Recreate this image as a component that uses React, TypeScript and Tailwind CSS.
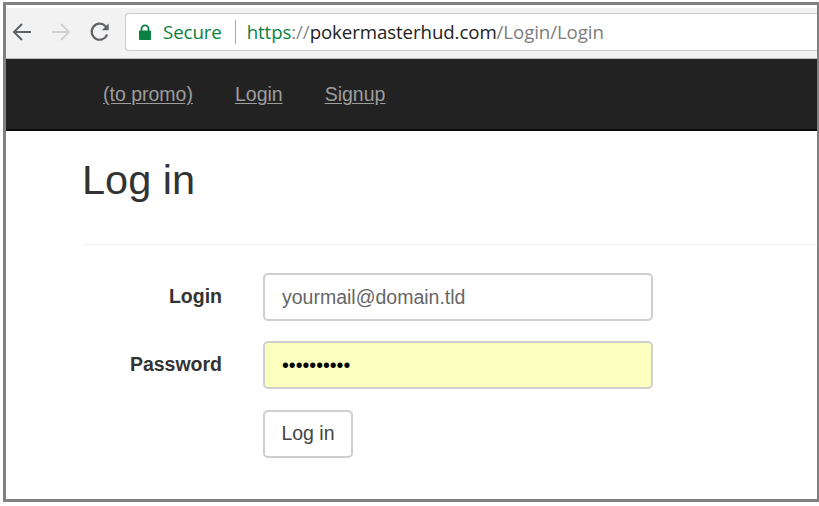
const links = ['(to promo)', 'Login', 'Signup']

const inputBase =
  'h-12 w-[390px] rounded-[5px] border-2 border-[#cfcfcf] px-[17px] text-[19.5px] outline-none font-["Liberation_Sans",Arial,sans-serif]'

function Toolbar() {
  return (
    <div className="flex h-[54px] items-center border-b border-[#bdbdbd] border-t-[3px] border-t-white bg-[#f2f2f2] pb-[2px] font-['Open_Sans','Noto_Sans',sans-serif]">
      <div className="ml-[4px] flex w-[115px] items-center">
        <svg width="24" height="24" viewBox="0 0 24 24" fill="none" stroke="#5f6368" strokeWidth="2" className="ml-0">
          <path d="M21 12H4M12 4l-8 8 8 8" />
        </svg>
        <svg width="24" height="24" viewBox="0 0 24 24" fill="none" stroke="#cfd1d3" strokeWidth="2" className="ml-[15px]">
          <path d="M3 12h17M12 4l8 8-8 8" />
        </svg>
        <svg width="24" height="24" viewBox="0 0 24 24" fill="none" stroke="#5f6368" strokeWidth="2.2" className="ml-[15px]">
          <path d="M19.2 14.5A8 8 0 1 1 17.6 6.3L20 8.6" />
          <path d="M20.6 3.4v6.8h-6.8" fill="#5f6368" stroke="none" />
        </svg>
      </div>
      <div className="flex h-[38px] flex-1 items-center rounded-l-[4px] border border-r-0 border-[#cdcdcd] bg-white pl-[12px] text-[18.7px] tracking-[-0.1px]">
        <svg width="14" height="17" viewBox="0 0 14 17" className="shrink-0">
          <path d="M3.5 7V4.8a3.5 3.5 0 0 1 7 0V7" fill="none" stroke="#0b8043" strokeWidth="1.8" />
          <rect x="1" y="6.5" width="12" height="9.5" rx="1" fill="#0b8043" />
        </svg>
        <span className="ml-[11px] text-[#0b8043]">Secure</span>
        <span className="ml-[13px] h-[24px] w-px bg-[#a8a8a8]" />
        <span className="ml-[11px] whitespace-nowrap">
          <span className="text-[#0b8043]">https</span>
          <span className="text-[#8a8a8a]">://</span>
          <span className="text-[#222222]">pokermasterhud.com</span>
          <span className="text-[#7d7d7d]">/Login/Login</span>
        </span>
      </div>
    </div>
  )
}

export default function App() {
  return (
    <div className="h-[506px] w-[819px] overflow-hidden bg-white pl-[3px] pt-[2px] font-['Liberation_Sans',Arial,sans-serif]">
      <div className="h-[500px] w-[816px] border-[3px] border-r-2 border-[#808080] bg-white">
        <Toolbar />

        {/* Nav */}
        <nav className="flex h-[72px] items-center gap-[42px] border-b-2 border-[#0c0c0c] bg-[#222222] pl-[97px] pt-[2px] text-[19.5px] text-[#9d9d9d]">
          {links.map(link => (
            <a key={link} className="underline underline-offset-2">
              {link}
            </a>
          ))}
        </nav>

        <main className="pl-[77px]">
          <h1 className="-ml-px pt-[24px] text-[41.5px] leading-[50px] text-[#333333]">Log in</h1>
          <hr className="mt-[39px] border-[#eeeeee]" />

          <form className="mt-[28px] flex flex-col gap-5">
            <div className="flex items-center">
              <label className="w-[139px] text-right text-[19.5px] font-bold text-[#333333]">Login</label>
              <input readOnly value="yourmail@domain.tld" className={`ml-[41px] bg-white text-[#666666] ${inputBase}`} />
            </div>
            <div className="flex items-center">
              <label className="w-[139px] text-right text-[19.5px] font-bold text-[#333333]">Password</label>
              <input readOnly type="password" value="••••••••••" className={`ml-[41px] bg-[#fbffbd] text-black ${inputBase}`} />
            </div>
            <div className="pl-[180px] pt-[1px]">
              <button type="button" className="h-12 w-[90px] rounded-[5px] border-2 border-[#cfcfcf] bg-white text-[19.5px] text-[#444444]">
                Log in
              </button>
            </div>
          </form>
        </main>
      </div>
    </div>
  )
}
